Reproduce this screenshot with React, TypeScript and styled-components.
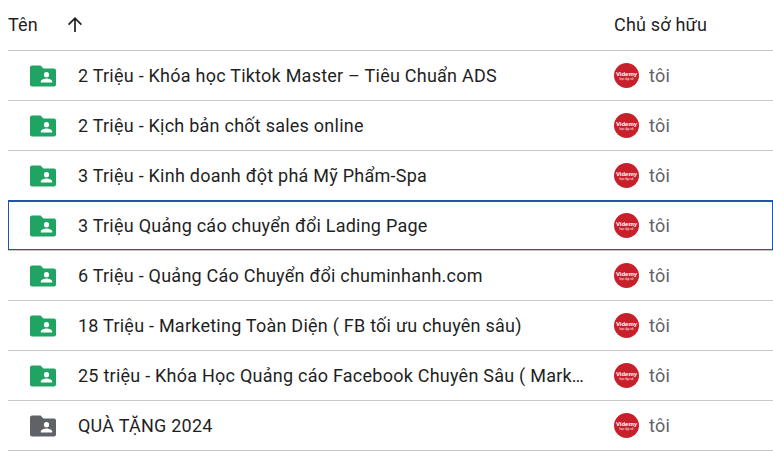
import React from "react";
import styled, { createGlobalStyle } from "styled-components";

const GlobalStyle = createGlobalStyle`
  html, body {
    margin: 0;
    padding: 0;
    background: #fff;
    overflow: hidden;
  }
`;

const Page = styled.div`
  width: 773px;
  height: 465px;
  padding-left: 8px;
  box-sizing: border-box;
  font-family: Roboto, "Noto Sans", sans-serif;
  color: #1f1f1f;
`;

const Header = styled.div`
  display: grid;
  grid-template-columns: 606px 1fr;
  align-items: center;
  height: 51px;
  box-sizing: border-box;
  border-bottom: 1px solid #c7c7c7;
  font-size: 18px;
  letter-spacing: 0.2px;
`;

const NameHead = styled.div`
  display: flex;
  align-items: center;
  gap: 28px;
  padding-bottom: 2px;
`;

const SortArrow = styled.svg`
  width: 18px;
  height: 18px;
  margin-top: 2px;
`;

const OwnerHead = styled.div`
  padding-bottom: 2px;
`;

const Row = styled.div<{ $selected?: boolean }>`
  display: grid;
  grid-template-columns: 606px 1fr;
  align-items: center;
  height: 50px;
  box-sizing: border-box;
  border-bottom: 1px solid #c7c7c7;
  ${(p) => p.$selected && `box-shadow: inset 0 0 0 1px #1f55ad, 0 -1px 0 #1f55ad;`}
`;

const NameCell = styled.div`
  display: flex;
  align-items: center;
  padding-left: 22px;
  min-width: 0;
`;

const FolderIcon = styled.svg`
  flex: none;
  width: 26px;
  height: 22px;
  margin-right: 22px;
`;

const Title = styled.span`
  font-size: 18px;
  letter-spacing: 0.24px;
  line-height: 24px;
  width: 512px;
  white-space: nowrap;
  overflow: hidden;
  text-overflow: ellipsis;
`;

const OwnerCell = styled.div`
  display: flex;
  align-items: center;
  gap: 10px;
`;

const Avatar = styled.div`
  flex: none;
  width: 25px;
  height: 25px;
  border-radius: 50%;
  background: #c8202b;
  color: #fff;
  display: flex;
  flex-direction: column;
  align-items: center;
  justify-content: center;
  font-family: "Liberation Sans", sans-serif;
  overflow: hidden;
`;

const AvatarName = styled.span`
  font-size: 6px;
  line-height: 7px;
  font-weight: 700;
`;

const AvatarSub = styled.span`
  font-size: 3px;
  line-height: 3px;
  white-space: nowrap;
`;

const OwnerName = styled.span`
  font-size: 18px;
  color: #5f6368;
  letter-spacing: 0.3px;
`;

const Folder: React.FC<{ color: string }> = ({ color }) => (
  <FolderIcon viewBox="0 0 26 22">
    <path
      d="M2 0.5h8.6l2.8 3H24a2 2 0 0 1 2 2v14a2 2 0 0 1-2 2H2a2 2 0 0 1-2-2V2.5a2 2 0 0 1 2-2z"
      fill={color}
    />
    <circle cx="16.5" cy="9.7" r="2.6" fill="#fff" />
    <path
      d="M10.8 17.5v-1.1c0-1.9 3.8-2.9 5.7-2.9s5.7 1 5.7 2.9v1.1z"
      fill="#fff"
    />
  </FolderIcon>
);

const green = "#1fa463";
const grey = "#5f6368";

const rows = [
  { title: "2 Triệu - Khóa học Tiktok Master – Tiêu Chuẩn ADS", color: green },
  { title: "2 Triệu - Kịch bản chốt sales online", color: green },
  { title: "3 Triệu - Kinh doanh đột phá Mỹ Phẩm-Spa", color: green },
  { title: "3 Triệu Quảng cáo chuyển đổi Lading Page", color: green, selected: true },
  { title: "6 Triệu - Quảng Cáo Chuyển đổi chuminhanh.com", color: green },
  { title: "18 Triệu - Marketing Toàn Diện ( FB tối ưu chuyên sâu)", color: green },
  { title: "25 triệu - Khóa Học Quảng cáo Facebook Chuyên Sâu ( Marketing", color: green },
  { title: "QUÀ TẶNG 2024", color: grey },
];

export default function App() {
  return (
    <Page>
      <GlobalStyle />
      <Header>
        <NameHead>
          <span>Tên</span>
          <SortArrow viewBox="0 0 18 18" fill="none" stroke="#1f1f1f" strokeWidth="1.7">
            <path d="M9 16V2.5M2.6 8.6 9 2.2l6.4 6.4" />
          </SortArrow>
        </NameHead>
        <OwnerHead>Chủ sở hữu</OwnerHead>
      </Header>
      {rows.map((r) => (
        <Row key={r.title} $selected={r.selected}>
          <NameCell>
            <Folder color={r.color} />
            <Title>{r.title}</Title>
          </NameCell>
          <OwnerCell>
            <Avatar>
              <AvatarName>Videmy</AvatarName>
              <AvatarSub>học tập số</AvatarSub>
            </Avatar>
            <OwnerName>tôi</OwnerName>
          </OwnerCell>
        </Row>
      ))}
    </Page>
  );
}
